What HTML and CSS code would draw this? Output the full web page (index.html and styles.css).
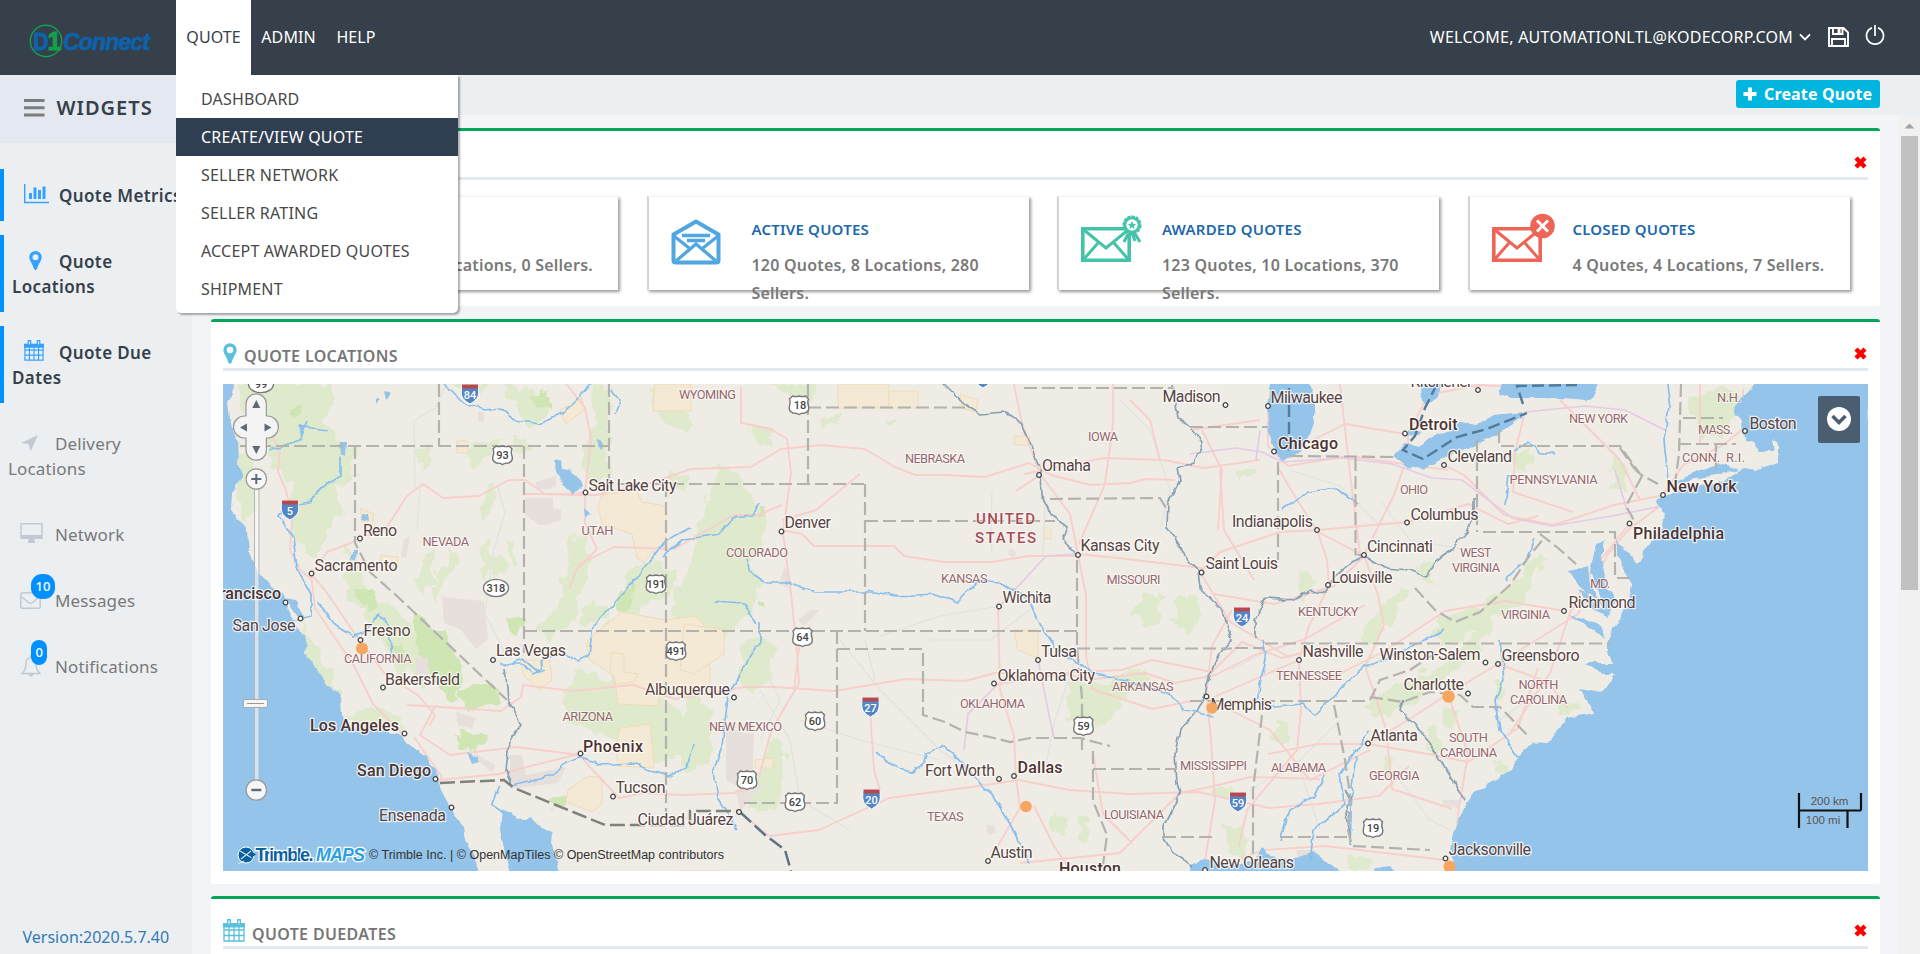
FILE: index.html
```html
<!DOCTYPE html>
<html lang="en">
<head>
<meta charset="utf-8">
<title>D1Connect</title>
<link rel="stylesheet" href="styles.css">
</head>
<body>
<header class="topbar">
  <div class="logo">
    <svg width="124" height="36" viewBox="0 0 124 36">
      <circle cx="17" cy="18" r="15.700" fill="none" stroke="#12a04f" stroke-width="1.400"/>
      <text x="4.500" y="26.500" class="logo-d" textLength="15" lengthAdjust="spacingAndGlyphs">D</text>
      <text x="18.500" y="27" class="logo-one">1</text>
      <text x="34" y="26.500" class="logo-word" textLength="87">Connect</text>
    </svg>
  </div>
  <nav class="menu">
    <div class="menu-item open">QUOTE
      <ul class="dropdown">
        <li>DASHBOARD</li>
        <li class="current">CREATE/VIEW QUOTE</li>
        <li>SELLER NETWORK</li>
        <li>SELLER RATING</li>
        <li>ACCEPT AWARDED QUOTES</li>
        <li>SHIPMENT</li>
      </ul>
    </div>
    <div class="menu-item">ADMIN</div>
    <div class="menu-item">HELP</div>
  </nav>
  <div class="user">
    <span>WELCOME, AUTOMATIONLTL@KODECORP.COM</span>
    <svg class="chev" width="12" height="8" viewBox="0 0 12 8"><path d="M1 1.300 6 6.300 11 1.300" fill="none" stroke="#fff" stroke-width="1.900"/></svg>
    <svg class="save" width="21" height="20" viewBox="0 0 21 20"><path d="M1 1h14.500l4.500 4.500V19H1zM5 1v6h9.500V1M4 19v-7h13v7" fill="none" stroke="#fff" stroke-width="1.900"/><path d="M9.500 2h3v4h-3z" fill="#fff"/></svg>
    <svg class="power" width="20" height="22" viewBox="0 0 20 22"><path d="M7 3.700a8.500 8.500 0 1 0 6 0M10 1v11" fill="none" stroke="#fff" stroke-width="1.700"/></svg>
  </div>
</header>

<div class="shell">
  <aside class="sidebar">
    <div class="widgets"><svg width="21" height="18" viewBox="0 0 21 18"><path d="M0 1.500h20.500M0 8.700h20.500M0 16h20.500" stroke="#7d7d7d" stroke-width="3"/></svg><span>WIDGETS</span></div>
    <ul class="side-list">
      <li class="active nowrap"><i class="ico"><svg width="25" height="20" viewBox="0 0 25 20"><path d="M.700 0v18.500H25" fill="none" stroke="#36a2ff" stroke-width="1.400"/><path d="M5 9h3v6H5zM9.500 3.500h3V15h-3zM14 6h3v9h-3zM18.500 2.500h3V15h-3z" fill="#36a2ff"/></svg></i>Quote Metrics</li>
      <li class="active"><i class="ico pin"><svg width="13" height="19" viewBox="0 0 13 19"><path fill-rule="evenodd" d="M6.500 0A6.200 6.200 0 0 0 .3 6.300C.3 9.500 3.500 12.500 5 18q1.500 2 3 0c1.500-5.500 4.700-8.500 4.700-11.700A6.200 6.200 0 0 0 6.500 0Zm0 3.300a3 3 0 1 1 0 6 3 3 0 0 1 0-6Z" fill="#36a2ff"/></svg></i>Quote Locations</li>
      <li class="active"><i class="ico"><svg width="20" height="21" viewBox="0 0 22 23"><use href="#cal" fill="#36a2ff" stroke="#36a2ff"/></svg></i>Quote Due Dates</li>
      <li><i class="ico plane"><svg width="17" height="17" viewBox="0 0 17 17"><path d="M17 0 9.500 16.500 8 9 0 8Z" fill="#c3c9d3"/></svg></i>Delivery Locations</li>
      <li><i class="ico"><svg width="23" height="20" viewBox="0 0 23 20"><path d="M1 .700h21v14.500H1z" fill="none" stroke="#c3c9d3" stroke-width="1.400"/><path d="M1 12h21v4H1zM9 16h5l1 3v1H8v-1z" fill="#c3c9d3"/></svg></i>Network</li>
      <li><i class="ico"><svg width="21" height="17" viewBox="0 0 21 17"><rect x=".8" y=".8" width="19.400" height="15.400" rx="1.500" fill="none" stroke="#c3c9d3" stroke-width="1.500"/><path d="m1 4.500 7.500 6q2 1.300 4 0l7.500-6" fill="none" stroke="#c3c9d3" stroke-width="1.500"/></svg><b class="badge">10</b></i>Messages</li>
      <li><i class="ico bell"><svg width="20" height="22" viewBox="0 0 20 22"><path d="M1 18.500c3-2.500 4-6 4-10 0-8 10-8 10 0 0 4 1 7.500 4 10z" fill="none" stroke="#c3c9d3" stroke-width="1.500"/><path d="M7.500 19h5a2.500 2.500 0 0 1-5 0zM9 0h2v3H9z" fill="#c3c9d3"/></svg><b class="badge">0</b></i>Notifications</li>
    </ul>
    <div class="version">Version:2020.5.7.40</div>
  </aside>

  <main class="content">
    <div class="actions"><a class="create"><svg width="14" height="14" viewBox="0 0 14 14"><path d="M7 .500v13M.500 7h13" stroke="#fff" stroke-width="4"/></svg>Create Quote</a></div>
    <div class="scroller">
      <div class="panels">
        <section class="panel metrics">
          <div class="head"><span></span><svg class="x" width="13" height="13" viewBox="0 0 13 13"><use href="#cross"/></svg></div>
          <div class="cards">
            <div class="card"><div class="art"></div><div class="info"><h4>&nbsp;</h4><p>0 Quotes, 0 Locations, 0 Sellers.</p></div></div>
            <div class="card"><div class="art"><svg width="50" height="46" viewBox="0 0 50 46"><g fill="none" stroke="#4fa6e0" stroke-width="4" stroke-linejoin="round"><path d="M2.500 15.500v26q0 2 2 2h41q2 0 2-2v-26L25 2.500Z"/><path d="m3 17 15 12M47 17 32 29M5 42l20-17 20 17M11 16.500h28M16 21.500h18" stroke-width="3.300"/></g></svg></div><div class="info"><h4>ACTIVE QUOTES</h4><p>120 Quotes, 8 Locations, 280 Sellers.</p></div></div>
            <div class="card"><div class="art"><svg width="64" height="50" viewBox="0 0 64 50"><g fill="none" stroke="#45c3a8"><path d="M1.800 15.800h46.400v31.400H1.800z" stroke-width="3.600"/><path d="m3 17 22 18 22-18M3 46l14-16M47 46 33 30" stroke-width="3"/><circle cx="51" cy="12" r="8" fill="#fff" stroke-width="3.200" stroke-dasharray="3.300 .800"/><circle cx="51" cy="12" r="7" stroke-width="2.500"/><path d="m53 19 6 10M47 21l-4 8M51 20l3 8" stroke-width="3"/></g><path d="m51 8 1.200 2.800 3 .200-2.300 1.900.800 3-2.700-1.600-2.700 1.600.8-3L46.800 11l3-.200z" fill="#45c3a8"/></svg></div><div class="info"><h4>AWARDED QUOTES</h4><p>123 Quotes, 10 Locations, 370 Sellers.</p></div></div>
            <div class="card"><div class="art"><svg width="64" height="50" viewBox="0 0 64 50"><g fill="none" stroke="#ec6557"><path d="M1.800 15.800h46.400v31.400H1.800z" stroke-width="3.600"/><path d="m3 17 22 18 22-18M3 46l14-16M47 46 33 30" stroke-width="3"/></g><circle cx="50.500" cy="13" r="12.300" fill="#ec6557"/><path d="m45 7.500 11 11m0-11-11 11" stroke="#fff" stroke-width="3"/></svg></div><div class="info"><h4>CLOSED QUOTES</h4><p>4 Quotes, 4 Locations, 7 Sellers.</p></div></div>
          </div>
        </section>

        <section class="panel locations">
          <div class="head"><span><svg width="14" height="21" viewBox="0 0 13 19"><path fill-rule="evenodd" d="M6.500 0A6.200 6.200 0 0 0 .3 6.300C.3 9.500 3.500 12.500 5 18q1.500 2 3 0c1.500-5.500 4.700-8.500 4.700-11.700A6.200 6.200 0 0 0 6.500 0Zm0 3.300a3 3 0 1 1 0 6 3 3 0 0 1 0-6Z" fill="#5bc0de"/></svg>QUOTE LOCATIONS</span><svg class="x" width="13" height="13" viewBox="0 0 13 13"><use href="#cross"/></svg></div>
          <svg class="map" width="1645" height="487" viewBox="223 384 1645 487">
            <defs>
              <path id="cross" d="M2 2 11 11M11 2 2 11" stroke="#f00" stroke-width="4.500"/>
              <g id="cal"><path d="M1 6h20v16H1zM1 11h20M1 16.500h20M6 8v14M11 8v14M16 8v14" fill="none" stroke-width="1.300"/><path d="M0 4h22v4.500H0z" stroke="none"/><path d="M6 1v4M16 1v4" stroke-width="4" stroke-linecap="round"/><path d="M6 1.500v3M16 1.500v3" stroke="#fff" stroke-width="1.300"/></g>
              <g id="inter"><path d="M-8-9H8q2 9-1 13.500Q4 8 0 10-4 8-7 4.500-10 0-8-9Z" fill="#5486c6" stroke="#fff" stroke-width="1"/><path d="M-8-9.500H8v4H-8Z" fill="#b8474f"/></g>
              <path id="us" d="M-6.500-9q3 1.300 6.500 0 3.500 1.300 6.500 0L9.500-6Q8-3 9.500 1 11 6 6 8 2 8 0 9.500-2 8-6 8q-5-2-3.500-7 1.500-4 0-7Z" fill="#fff" stroke="#777" stroke-width="1.400"/>
              <ellipse id="st" rx="12.500" ry="8.700" fill="#fff" stroke="#777" stroke-width="1.300"/>
              <circle id="c" r="2.300" fill="#fff" stroke="#444" stroke-width="1.300"/>
              <filter id="rough" x="-5%" y="-5%" width="110%" height="110%"><feTurbulence type="fractalNoise" baseFrequency=".07" numOctaves="3" seed="4"/><feDisplacementMap in="SourceGraphic" scale="18" xChannelSelector="R" yChannelSelector="G"/></filter>
              <filter id="shore" x="-5%" y="-5%" width="110%" height="110%"><feTurbulence type="fractalNoise" baseFrequency=".09" numOctaves="2" seed="9"/><feDisplacementMap in="SourceGraphic" scale="6" xChannelSelector="R" yChannelSelector="G"/></filter>
            </defs>
            <rect x="223" y="384" width="1645" height="487" fill="#efece5"/>

            <!-- forests and parks -->
            <g fill="#dfe9cc" filter="url(#rough)">
              <path d="M236 384h98l4 20-14 14 20 30 12 30-22 10 10 24-18 20-8 30-16-10-14-36 4-30-20-20-8-36-20-16z"/>
              <path d="M332 446h24l-2 34-12 8zM345 540l20 40 26 40 20 50-10 8-22-40-30-40-4-40zM372 590l24 20 16 30-14 6-20-24z"/>
              <path d="M236 446l16 10 6 40-10 30-10-20zM346 715l30-8 30 16-10 10-40-4zM300 620l20 34 22 40-8 2-26-34z"/>
              <path d="M418 450l14-8-4 22-8 6zM464 446l36-6-6 14-12 4-2 14-8-2zM490 480l8 2-10 40-10 2zM480 545l10-4 2 26-10 12zM450 550l10 4-16 30-8 16-6-10zM425 555l10-6-2 30-10 16-6-14zM508 540l6 2 2 22-6 2z"/>
              <path d="M500 384l40 4 6 30-16 12-14-24zM512 434h14l2 16-14-2zM594 384l14 2 2 90-18 12-12-30 10-20zM646 384l20 2 30 40-8 10-28-20zM570 540l16-6 4 30-16 50-22 26-14-10 24-30z"/>
              <path d="M628 568l30-10 20 20-10 20-24 4-12 14-16 6zM580 606l28-4 4 20-28 4zM575 670l40 10 46 20 36 26-6 30-40 4-30-22-60-20z"/>
              <path d="M720 462l18 14 12 20 14 22-4 30-14 14 16 20-12 30-30 30-20-4-30-16 6-30 20-30-2-30 12-24z"/>
              <path d="M748 422l24 8 2 20-16-6zM768 384h50l-6 14-20-2zM670 470l20 10-6 14-14-8zM744 636l30 8-4 40-20 14-12-20zM690 690l24 20-6 50-22 14-10-20zM770 740l16 6-8 60-30 4 14-40z"/>
              <path d="M1068 680l40 4 26-18 16 10-30 24-10 20-36 6-8-24zM1075 705l40 8-12 14-36-4zM1056 814l14 6-4 14-14-6zM1080 818l10 2-4 24-8-6zM1150 590l10 6 2 24-16 8-14-14zM1178 596l18 2 6 20-14 14-14-10zM820 418l24-4-6 10-16 2zM886 418l14 2-8 6z"/>
              <path d="M1235 846l10-10 4 20-10 8zM1275 720l16 4-2 20-14-4zM1215 785l20 4-8 12-12-6zM1225 828l20-8-4 34-12-4zM1350 856l24 4-12 12-14-4zM1384 756l14 4-8 18-8-6z"/>
              <path d="M1370 704l28-20 34-14 30-24 20-6-10 20-30 20-30 24-34 14-14-8zM1440 620l36-14 34-20 28-34 10 6-20 34-40 34-44 22-10-14zM1450 660l30-30 10-10 4 10-30 34zM1360 636l14-20 26-30 10 4-22 34-18 24z"/>
              <path d="M1510 450l20-4 2 18-14 8zM1416 564l14 2 2 16-12-2zM1300 570l14 14-10 20-8-10zM1232 470h22l4 6-24 2zM1444 706l14 6-2 14-14-6zM1426 730l10-4 6 20-10 10zM1495 760l12 4 6 12-16-2zM1555 700l20 2 10 8-26 4zM1495 680l8 2-2 20-8-4zM1690 400l30-14 20 10-10 30-30 14zM1615 450l14 16-6 30-10-6z"/>
              <path d="M450 384l40 0-6 10-20 0zM490 560l10-6 4 16-8 10zM398 610l10 10 20 50-8 16-26-40z"/>
            </g>
            <g fill="#cfe6b4" filter="url(#rough)">
              <path d="M412 615l30 18 20 34-4 34-14-4-26-44zM356 594l20-6 4 18-16 8zM386 640l16 4 4 16-12-2zM460 690l34-10 6 20-22 10-16-8zM456 735l28-4 2 14-24 2zM290 406h10v10h-10zM532 396l14-6 2 20-10 2zM506 620l14-6 0 14-8 8zM620 590l18-4-8 20-12 4zM758 505l8 0 0 14-8-2zM550 798l12-2v10h-10zM760 602l6 0 0 8-6-2z"/>
            </g>
            <!-- deserts, monuments and reserves -->
            <g fill="#f4e9d5" stroke="#efdcb8" stroke-width="1">
              <path d="M655 384h36v27h-38zM838 384h51v24h-51zM889 391h29v17h-29zM602 495l34-5 6 12 24 4v42l-14 4-8 10-7-4-5-24-30-10-4-18zM592 636l30-24 44 8 30-4 14 16v54l-20 10-30-6-2 16-40-2-4-28-24-16-4-16zM620 728l30-4 4 44-36-2-2-20zM568 790l20-14 14 2v26l-10 8-26-10z"/>
              <path d="M457 441h11v12h-11zM560 410l22-12 2 12-18 14zM1014 630l24 0v28l-20-8zM1014 436h16v9h-16zM1044 528h7v11h-7zM960 394l18 6-2 12-14-4zM360 508l14 6-2 14-10-6zM380 555l18 2 0 10-16-3zM755 760l18-2v10h-18zM684 624l40 6v24l-30 20-14-4zM680 874h44v-3h-44zM520 660l30 0 2 20-12 10-16-14z"/>
              <path d="M612 652l12 2 0 18 14 2-4 8-18 2-6-12z" fill="none"/>
            </g>
            <g fill="#e7dfdc">
              <path d="M536 482l20-6v10l-6 3h-14zM525 498h28v10l8 2v10l-14 5h-8l-14-10zM442 597l42 4 4 38-12 10-16-20-16-6zM416 658l12 0v22l-12-4zM456 712l20 6-4 10-14-2zM726 730l28 4-2 60-26-14zM736 790l28-8-24 30zM510 755l12 0 4 20 40-8-8 16-48 6zM478 412h6v9h-6zM785 566l4 8-2 14-8-4zM810 610l10 0-16 16-6-6zM986 825l8 0 2 8-8 2zM404 806l16 0-8 4zM475 753l20 12-2 8-20-16zM1442 800l20 0-4 8-14-2z"/>
              <path d="M1296 850l18 0 6 4-22 6zM404 540l6-4-4 22-5-2zM1010 548l6 4-2 6-6-4z"/>
            </g>

            <!-- minor roads -->
            <g fill="none" stroke="#e1e2e1" stroke-width="1.200">
              <path d="M415 490l-1-70 22-12 10-24M420 490l-3 40M497 483l8 30-12 40-8 60 20 40M840 640l40 50 60 60 40 30M760 690l30 50 10 60 50 30M800 720l60 20 80 20M865 640l10 40M1000 606l-60 10-60 20M1045 505l-2 50M992 492l-1 40 1 20M750 640l30 60-20 40M1075 660l-20 60-10 50M930 640l60 0 40-30M1120 400l30 30 20 60-10 40M1290 470l50 16 40 40M1380 500l30 40 60 10M1230 670l40-20M1340 720l-40 40-50 30M1400 780l30 40 20 10M1540 690l-40 30M1300 770l20 60M640 560l50 40"/>
            </g>
            <!-- highways -->
            <g fill="none" stroke="#f7cfcb" stroke-width="1.900" stroke-linejoin="round">
              <path d="M268 430l12 20-2 22 8 18 6 30-2 30 10 20 10 8M311 574l16-22 22-8 10-6 26-8 22-34 16-12 20 14 36-2 30-16h16l20 14 26 1 26 0 14-4 40-8 40-14 60-2 30-18 40-4 44 4 30 18 20 8h30l40 2 44-14 22 12 40 10 40-2 14-4 30 1M1040 475l-24 16M311 574l14 16 30 44 30 40 34 22 16 20-6 10M400 735l8 20 24 14 6 14 4-6-14-20-14-20M311 574l4 34 20 30 18 26 20 40 30 30M436 705l-16 30 30 20 66-8 64 8M407 705l34 2 60 4 20-14 2-12 50 6 60-6 42 14 70-12 30 0 60 4 70-12 60 2 30-8 60 0 40 6 50-6 30 10 40-8 40-20 50-16 60-34"/>
              <path d="M439 780l60-6 80-20 10 12 30 32 24-5 40 2 50-2 20-6M524 494h50l11-2 6-54-6-30-20-26M585 493l0 30 12 26-20 20-8 20M578 565l36-18 60 2 60-34 24 0 24-10M741 387v36l30 6 16 10 4 34-8 60 8 60 6 60 2 30-28 48-12 46M782 530l20 4 12 12h80l10 10 40 6h48l36-6 50 0M782 520l34-10 44-36M739 812l30 24 50-6 70-32 90-12 40-6 50 10 60 4 70-2 70 16 50-4 60-8 30-30M800 640l-6 50M1034 806l20 40 16 24M1016 778l4 30-20 34-12 20M870 710l4 60 6 20M1016 776l-2-40-14-46-2-84M998 684l40-6 34-6 50-2 30-10 60 12 30-30 40 16 40-10 36 4M1078 555l8 40 0 60 6 34 60 20 40-8"/>
              <path d="M1014 384l8 40 18 50 30 40 8 40 40 4 50 6 34 4M1024 474l80-16 60 2 40 8 56-8M1113 384v40l-8 60-26 60M1160 460l-10-40-20-20M1200 572l20-20 60-20 38-2 44-4 46-4 60-18 40 20 30-8M1317 530l-20-30-20-34M1317 530l10 30 2 26-20 40-10 34 2 50-4 40-50 60-8 36M1318 532l46 24-30 30-60 18-60-10M1364 555l14 40 6 30-18 40 0 4 20 60 6 60 60 20M1299 660l-46 20-46 20 4 40 4 60-10 60M1210 700l60 30 40 50 60-30M1368 744l40-24 40-26 50-30 80-50 30-60 20-24 40-30M1368 744l-50 0-50 10M1368 744l60 10 40 8 50-34 20-60M1448 694l20 60-10 60-4 50M1498 664l50 18 20 26"/>
              <path d="M1364 555l30-60 14-40 0-20 20-40 50-10 40 2 20 6M1444 465l20 10 40 40 50 10 60-20 50-10M1268 406l0 40 20 20 60-10 70 10 30 4M1405 434l-60-10-60 30M1340 384l10 90 10 80M1525 412l-10 40-2 40 60 20M1560 400l60 60 20 40M1630 523l-40 50-20 40-20 60-40 60M1565 611l-60-10-60 10-60 40-60 30M1663 495l20-30 40-20 20-16 0-40M1700 384l0 60M1205 870l60-20 60-4 120 14M1200 572l30 50 60 36M1206 696l6-50 20-36M1190 430l70-10M1218 530l4-60-20-40M1220 470l4 60 30 50M1180 793l30-6 40-10 70 2M1180 793l-20 20-40 40-100 10M1093 754l10 60 30 30"/>
            </g>
            <g fill="none" stroke="#e5cbe3" stroke-width="1.700"><path d="M1190 454l46-6 26 4 20 10 60-4 50 6 40 14 30 2 50 38 40 8 60-10 50-10M1525 412l60-6 40 4 40 20M1260 430l-4 30M1000 606l46-50 30-2M998 684l-30 30-4 36M1038 660l12 60 4 18M1615 470l12 40"/></g>

            <!-- lakes and sea -->
            <g fill="#94c4ea" filter="url(#shore)">
              <path d="M215 376h23l-10 27 2 17 7 23 1 17 5 17-11 15-1 18 7 8 9 12 2 20 6 15 8 12 9 10 12 6 3 10 3 12 16 25-1 13 16 22 12 15 7 7 1 18 10 12 29 3 20 5 6 8 20 14 10 15 5 18 9 17 13 20 2 13 11 17 2 24H215z"/>
              <path d="M502 808l21 12 7-3 8 8 15 7-1 13 10 34h-51l-11-49z"/>
              <path d="M553 460l9-1 1 9 9 2 11 15-10 10-8-8-7-14zM467 752l11 5 2 6-7 2zM340 442l6 0-1 14-4-2zM362 514l6 0 1 8-6-2zM352 550l5 0-1 10-4-2zM585 508l5 6-4 4zM384 390l8 4-6 6zM376 396l4 4-4 3zM598 440l5 2-2 8-4-4zM298 424l8 4-4 12zM285 598l12 2 6 20-8-6z"/>
              <path d="M1271 376h37l7 24v20l-8 23-14 15-10 2-8-8-6-19-2-26zM1420 376h24l-6 21-13 10-3-7zM1403 442l17 5 10-9 23-8 7-8 17 3 16-10 30-3v5l-23 16-23 12-24 8-30 16-16-2-13-10zM1503 376h99l-12 24-30-2-50 0-11-3zM1408 429l14 2-4 5-10-1z"/>
              <path d="M1868 376H1773l-18 8-16 16-6 14 8 8 1 10 4 8 8 2 6 10 14 0-2-12 6 4 0 18-22 8-12-2-18 12-40 8-24 8-6 5 8 12-2 14-12 16-12 20-16-16-5-8 0 12 6 18 9 14-2 13-10 24-9 13-3 10 0 10 5 10-6 0-22 0 18 12 12 0-13 18-22-4 10 16 3 8-26 5-19 24-15 1-15 14-6 13-22 13-17 12-11 17-9 20-3 20 5 28h420z"/>
              <path d="M1605 540l-9 5-6 26 8 20 10 24 8-14-10-16-4-28zM1588 566l-18 6 14 20 20 18-14-26zM1578 590l26 12 4 14-18-8zM1570 615l30 10 6 14-16-10zM1740 470l-50 10-20 6 20-12 30-10z"/>
              <path d="M1190 864l14-4 20 4 30-2 9-14 7 9 20 3 23-8 14 11 10 5 14 10h-160zM1374 868l16-2 6 8h-24z"/>
            </g>
            <!-- rivers -->
            <g fill="none" stroke="#86bfed" stroke-width="1.700" stroke-linejoin="round" filter="url(#shore)">
              <path d="M444 384l20 20 20 6 16-2 14 12 26 4 24-12 22-22 16-20M612 390l8 10-6 14M298 426l30 4M270 450l30-10 8-18M341 456v20l-20 12-12 14-24 4-6 10 14 22 4 30 14 26v22l-26 6M318 602l18 24 16 10 14-6 12-16 10 10 4 30M505 665l18-6 14 12 10-14 20-2 12 6 10-6 4-30 20-20 10-12 20-24 24-30 24-10M500 664l24 0 8 10 12-4M512 785l40-10 14-14 14-4 20 8 30-2 40 14 16-8 8-24M500 785l-8 20 12 8M663 556l20-16 36-6 14-16 20-2 6-14M747 558l6 16 12 8 20 0 30 10 60 0 20 4 40-2 22 8 22-22 20 2 30 18 10 24 16 24 40 26 44 10 30 10 16 16 28 6M760 622v20l-20 30-12 24-6 50-8 24 4 30 20 30M876 752l16 14 18 6 14-8 2-12 18-6 16 14 16 20 16 14 18 30 20 40M714 602l30 2 12 20"/>
              <path d="M1283 510l24-18 30-4 20 16M1310 860l4-30 30-26-4-30 20-30 10-14M1280 840l10-30 24-14 10-20M1350 846l2-60 4-30M1262 640l4 20-10 40 18 6 30-2 10 12 20-20 30-30 20-6 60-30M1500 640l4 40-8 20 4 30 20 30M1515 450l14-8 12 12 14 0M1505 505l4-30M1505 580l20-20 10-20M1668 480l-4-40 6-40-2-16"/>
            </g>
            <g fill="none" stroke="#7596ad" stroke-width="1.700" stroke-linejoin="round" filter="url(#shore)" opacity=".85">
              <path d="M943 384l22 21 15 9 25-2 17 12 8 19 10 27 1 25 11 20 16 12-5 13 13 15M1173 384l5 34 12 9 13 15-10 21-15 5 2 12-12 23-1 24 10 16 13 19 8 8 2 18 22 22 6 18 4 12-12 13-13 30-2 14-13 20-12 13-5 23 2 30 3 10-17 34v10l10 16 20 13M1355 555h8l22 13 25 2 17 7 10-17 13-10 17-17 8-23v-12M1363 555l-18 13-8 7-12 17-15-2-15 10-30-2-10 22 0 18M505 668l3 32 12 25-10 15-3 30 5 15M1403 700l-3 10 20 20 17 25 13 20 15 25M1345 790l6 8-5 8 4 30"/>
            </g>
            <!-- borders -->
            <g fill="none" stroke="#b4b2ad" stroke-width="2.200" stroke-dasharray="13 5">
              <path d="M240 446h369M355 446v97l15 29 28 25 109 103M439 384v62M609 384v100h256M666 484v331M524 446v207M524 631h553M837 631v172h-97M837 649h86v66l22 7 20 10 25 5 20 5 20-4 50 0 30 8M865 484v147M865 521h190M808 384v100M808 407.500h157M1077 560v88l5 50v52M1077 648.500h155M1235 648h28M1265 643.500h345M1050 499l110-1 6 10M1024 388h149M1093 751v50l14 34-4 30M1093 769h84M1190 427h78M1278 462v98M1355.500 458v97M1290 456l104 1M1477 440v92M1499 430v16h121l20 28 18 10M1483 532h132v46h18M1190 701h180M1262 715l-9 75v65M1334 705l11 55 5 35-2 35 4 16 78 4M1280 837h70M1163 837h50M1370 697l33 5 27-10 30 3 13 12h27l30 31M1370 700l10-20 30-10 30-20M1415 588l20 22 20 12 25-10 30-27 20-30 15-18M1681 384l-2 70-4 30M1683 418h40M1678 444h58M1716 444v26M1540 534l18 14 18 16M1620 448l14 20 8 8-16 30 10 18"/>
            </g>
            <g fill="none" stroke="#80807c" stroke-width="2.500" stroke-dasharray="15 5"><path d="M440 783l64-3 10 8 91 37h85v-14h49"/><path d="M740 812l25 23 20 15 6 21" stroke="#5c7585"/></g>
            <g fill="none" stroke="#547b98" stroke-width="2.400" stroke-dasharray="12 5"><path d="M1289 388v68M1437 384l-12 24-10 28-12 14 20 9 34-22 30-8 40-16M1523 404l-6-18 60-1" /></g>

            <!-- road shields -->
            <g class="shield">
              <use href="#st" x="261" y="384"/><text x="261" y="388">99</text>
              <use href="#st" x="496" y="588"/><text x="496" y="592">318</text>
              <use href="#us" x="502.500" y="455"/><text x="502.500" y="459">93</text>
              <use href="#us" x="656" y="584"/><text x="656" y="588">191</text>
              <use href="#us" x="676" y="651"/><text x="676" y="655">491</text>
              <use href="#us" x="799" y="405"/><text x="800" y="409">18</text>
              <use href="#us" x="802.500" y="637"/><text x="802.500" y="641">64</text>
              <use href="#us" x="815" y="721"/><text x="815" y="725">60</text>
              <use href="#us" x="747" y="780"/><text x="747" y="784">70</text>
              <use href="#us" x="795" y="802"/><text x="795" y="806">62</text>
              <use href="#us" x="1083.500" y="726"/><text x="1083.500" y="730">59</text>
              <use href="#us" x="1373" y="828"/><text x="1373" y="832">19</text>
            </g>
            <g class="shield interstate">
              <use href="#inter" x="470" y="394"/><text x="470" y="399">84</text>
              <use href="#inter" x="290" y="510"/><text x="290" y="515">5</text>
              <use href="#inter" x="870.500" y="707"/><text x="870.500" y="712">27</text>
              <use href="#inter" x="871.500" y="799"/><text x="871.500" y="804">20</text>
              <use href="#inter" x="1242" y="617"/><text x="1242" y="622">24</text>
              <use href="#inter" x="1238" y="802"/><text x="1238" y="807">59</text>
              <use href="#inter" x="983" y="378"/>
            </g>

            <!-- zoom slider track -->
            <rect x="254.500" y="489" width="4.500" height="292" fill="#fff" fill-opacity=".55" stroke="#b5b5b5"/>

            <!-- state names -->
            <g class="state">
              <text x="422.500" y="546" textLength="46.500">NEVADA</text><text x="581.500" y="535" textLength="32">UTAH</text>
              <text x="344" y="663" textLength="67.500">CALIFORNIA</text><text x="562.500" y="721" textLength="50.500">ARIZONA</text>
              <text x="679" y="399" textLength="57">WYOMING</text><text x="905" y="463" textLength="60">NEBRASKA</text>
              <text x="1088" y="441" textLength="30">IOWA</text><text x="726" y="557" textLength="62">COLORADO</text>
              <text x="941" y="583" textLength="46.500">KANSAS</text><text x="1106.500" y="584" textLength="54">MISSOURI</text>
              <text x="1112" y="691" textLength="61.500">ARKANSAS</text><text x="960" y="708" textLength="65">OKLAHOMA</text>
              <text x="709" y="731" textLength="73">NEW MEXICO</text><text x="927" y="821" textLength="36.500">TEXAS</text>
              <text x="1104" y="819" textLength="60">LOUISIANA</text><text x="1180" y="770" textLength="67">MISSISSIPPI</text>
              <text x="1569" y="423" textLength="59">NEW YORK</text><text x="1509.500" y="484" textLength="88">PENNSYLVANIA</text>
              <text x="1400" y="494" textLength="28">OHIO</text><text x="1460" y="557" textLength="31.500">WEST</text>
              <text x="1452" y="572" textLength="48">VIRGINIA</text><text x="1590" y="588" textLength="20">MD.</text>
              <text x="1298" y="616" textLength="60.500">KENTUCKY</text><text x="1501" y="619" textLength="49">VIRGINIA</text>
              <text x="1276" y="680" textLength="66">TENNESSEE</text><text x="1518.500" y="689" textLength="40">NORTH</text>
              <text x="1510" y="704" textLength="57">CAROLINA</text><text x="1449" y="742" textLength="39">SOUTH</text>
              <text x="1440" y="757" textLength="57">CAROLINA</text><text x="1271" y="772" textLength="55">ALABAMA</text>
              <text x="1369" y="780" textLength="50.500">GEORGIA</text><text x="1717" y="402" textLength="24">N.H.</text>
              <text x="1698" y="434" textLength="35">MASS.</text><text x="1682" y="462" textLength="38">CONN.</text><text x="1726" y="462" textLength="19">R.I.</text>
            </g>
            <g class="country"><text x="976" y="524" textLength="59">UNITED</text><text x="975" y="543" textLength="61">STATES</text></g>

            <!-- city names -->
            <g class="city" transform="translate(-.5 -.5)">
              <text x="589" y="491" textLength="88">Salt Lake City</text><text x="363.500" y="536" textLength="34">Reno</text>
              <text x="315" y="571" textLength="83">Sacramento</text><text x="233" y="631" textLength="63">San Jose</text>
              <text x="364" y="636.500" textLength="47">Fresno</text><text x="385.500" y="685" textLength="75">Bakersfield</text>
              <text x="496.500" y="656.500" textLength="70">Las Vegas</text><text x="379.500" y="821" textLength="67">Ensenada</text>
              <text x="616" y="793" textLength="50">Tucson</text><text x="638" y="825" textLength="96">Ciudad Juárez</text>
              <text x="645.500" y="695" textLength="85">Albuquerque</text><text x="1042.500" y="471.500" textLength="49">Omaha</text>
              <text x="785" y="528" textLength="46.500">Denver</text><text x="1081" y="551" textLength="79">Kansas City</text>
              <text x="1003" y="603" textLength="49">Wichita</text><text x="1041.500" y="657.500" textLength="36">Tulsa</text>
              <text x="998" y="681" textLength="97.500">Oklahoma City</text><text x="925.500" y="776" textLength="70">Fort Worth</text>
              <text x="991" y="858" textLength="42">Austin</text><text x="1163" y="402" textLength="58">Madison</text>
              <text x="1271" y="403" textLength="72">Milwaukee</text><text x="1411" y="387" textLength="62">Kitchener</text>
              <text x="1448" y="462" textLength="64.500">Cleveland</text><text x="1411" y="520" textLength="68">Columbus</text>
              <text x="1232.500" y="527.500" textLength="81">Indianapolis</text><text x="1367.500" y="552" textLength="66">Cincinnati</text>
              <text x="1206" y="569" textLength="72.500">Saint Louis</text><text x="1332" y="583" textLength="61">Louisville</text>
              <text x="1569" y="608" textLength="67">Richmond</text><text x="1303" y="657.500" textLength="61">Nashville</text>
              <text x="1380" y="660" textLength="101">Winston-Salem</text><text x="1502" y="661" textLength="78">Greensboro</text>
              <text x="1404" y="690" textLength="60.500">Charlotte</text><text x="1211" y="710" textLength="61.500">Memphis</text>
              <text x="1371" y="741" textLength="47.500">Atlanta</text><text x="1449" y="855.500" textLength="82.500">Jacksonville</text>
              <text x="1210" y="868" textLength="84.500">New Orleans</text><text x="1750" y="429" textLength="47">Boston</text>
            </g>
            <g class="city major" transform="translate(-.5 -.5)">
              <text x="281.500" y="599" text-anchor="end">San Francisco</text><text x="310.500" y="731" textLength="89">Los Angeles</text>
              <text x="357.500" y="776" textLength="74">San Diego</text><text x="583.500" y="752" textLength="60">Phoenix</text>
              <text x="1018" y="773" textLength="45">Dallas</text><text x="1059.500" y="874.500" textLength="62">Houston</text>
              <text x="1278.500" y="449" textLength="60">Chicago</text><text x="1409.500" y="430" textLength="48.500">Detroit</text>
              <text x="1667" y="492" textLength="70">New York</text><text x="1633.500" y="539" textLength="91">Philadelphia</text>
            </g>
            <g>
              <use href="#c" x="585.500" y="492.500"/><use href="#c" x="360" y="538.500"/><use href="#c" x="311.500" y="573.500"/><use href="#c" x="285.500" y="602.500"/><use href="#c" x="300.500" y="618.500"/><use href="#c" x="360.500" y="640"/><use href="#c" x="383" y="687.500"/><use href="#c" x="493" y="660"/><use href="#c" x="404.500" y="733.500"/><use href="#c" x="435.500" y="779"/><use href="#c" x="451.500" y="807.500"/><use href="#c" x="580.500" y="753.500"/><use href="#c" x="613" y="796.500"/><use href="#c" x="739" y="812"/><use href="#c" x="734" y="697.500"/><use href="#c" x="1039" y="475"/><use href="#c" x="781.500" y="531.500"/><use href="#c" x="1078" y="555"/><use href="#c" x="999" y="606.500"/><use href="#c" x="1038" y="660"/><use href="#c" x="994" y="683.500"/><use href="#c" x="999" y="779"/><use href="#c" x="1014" y="776"/><use href="#c" x="988" y="861"/><use href="#c" x="1225.500" y="405"/><use href="#c" x="1268" y="406"/><use href="#c" x="1274" y="451.500"/><use href="#c" x="1478" y="390"/><use href="#c" x="1405" y="433.500"/><use href="#c" x="1444" y="465"/><use href="#c" x="1407" y="522.500"/><use href="#c" x="1317" y="530"/><use href="#c" x="1364" y="555"/><use href="#c" x="1201.500" y="572.500"/><use href="#c" x="1328" y="585"/><use href="#c" x="1564" y="611"/><use href="#c" x="1663" y="495"/><use href="#c" x="1629.500" y="523.500"/><use href="#c" x="1299" y="660"/><use href="#c" x="1485.500" y="662.500"/><use href="#c" x="1498" y="664"/><use href="#c" x="1468" y="693.500"/><use href="#c" x="1206.500" y="696.500"/><use href="#c" x="1368" y="743.500"/><use href="#c" x="1445.500" y="858.500"/><use href="#c" x="1205" y="870"/><use href="#c" x="1745" y="431"/>
            </g>
            <!-- quote markers -->
            <g fill="#f7a55f"><circle cx="362" cy="648.500" r="6"/><circle cx="1212" cy="708" r="5.800"/><circle cx="1448.500" cy="696.500" r="6.300"/><circle cx="1026" cy="806.500" r="5.800"/><circle cx="1449.500" cy="866.500" r="6"/></g>

            <!-- pan and zoom control -->
            <path d="M246 416V404a10.200 10.200 0 0 1 20.400 0V416h1a11 11 0 0 1 0 22h-1V450a10.200 10.200 0 0 1-20.400 0V438h-1.500a11 11 0 0 1 0-22z" fill="#f4f4f4" stroke="#999" stroke-width="1.200"/>
            <path d="m256.300 400 4 8h-8zM256.300 454l4-8h-8zM240 427.500l7-4v8zM271.500 427.500l-7-4v8z" fill="#5d6b78"/>
            <circle cx="256.300" cy="479" r="10.200" fill="#f6f6f6" stroke="#999" stroke-width="1.200"/><path d="M251.300 479h10M256.300 474v10" stroke="#5d6b78" stroke-width="2"/>
            <rect x="243.500" y="699.500" width="24" height="8" rx="1.500" fill="#f6f6f6" stroke="#aaa"/><path d="M247 703.500h17" stroke="#999"/>
            <circle cx="256.300" cy="790" r="10.200" fill="#f6f6f6" stroke="#999" stroke-width="1.200"/><path d="M251.300 790h10" stroke="#5d6b78" stroke-width="2.400"/>

            <rect x="1818" y="396" width="42" height="47" rx="2" fill="#4b5d70"/><circle cx="1839" cy="419" r="12" fill="#fff"/><path d="m1832.500 416 6.500 6.500 6.500-6.500" fill="none" stroke="#4b5d70" stroke-width="3.500"/>

            <path d="M1799 793v35M1799 810.500h62M1861 793v17.500M1847.500 811v17" fill="none" stroke="#111" stroke-width="2.200"/>
            <text class="scale" x="1829.500" y="805">200 km</text><text class="scale" x="1823" y="824">100 mi</text>

            <g class="trimble"><circle cx="246" cy="855" r="8" fill="#0a5f9e" stroke="#fff"/><path d="M240 851l12 7M241 859l10-8M238 864l6-3" stroke="#cfe4f5" stroke-width="1.100"/><path d="m251 851 5 3.500-5 3.500z" fill="#0a5f9e"/>
            <text x="255.500" y="861" textLength="58" fill="#0a5f9e">Trimble.</text><text x="316" y="861" textLength="49" fill="#2f9fe0" font-style="italic">MAPS</text></g>
            <text class="credit" x="369" y="858.500" textLength="355">© Trimble Inc. | © OpenMapTiles © OpenStreetMap contributors</text>
          </svg>
        </section>

        <section class="panel duedates">
          <div class="head"><span><svg width="22" height="23" viewBox="0 0 22 23"><use href="#cal" fill="#5bc0de" stroke="#5bc0de"/></svg>QUOTE DUEDATES</span><svg class="x" width="13" height="13" viewBox="0 0 13 13"><use href="#cross"/></svg></div>
        </section>
      </div>
      <div class="scrollbar"><svg width="21" height="21" viewBox="0 0 21 21"><path d="M5.500 13.500 10.500 8.500 15.500 13.500Z" fill="#a3a3a3"/></svg><div class="thumb"></div></div>
    </div>
  </main>
</div>
</body>
</html>
```
FILE: styles.css
```css
* { box-sizing: border-box; }
body { margin: 0; height: 954px; overflow: hidden; display: flex; flex-direction: column; font: 16px "Noto Sans", sans-serif; color: #797979; background: #f2f4f8; }
ul { list-style: none; margin: 0; padding: 0; }
svg { display: block; flex: none; }

.topbar { height: 75px; flex: none; display: flex; background: #36404a; color: #fff; }
.logo { width: 176px; padding: 23px 0 0 29px; }
.logo text { font-family: "Liberation Sans", sans-serif; font-weight: bold; }
.logo-d { font-size: 23px; fill: #0d62ad; stroke: #0d62ad; }
.logo-one { font-size: 25px; fill: #12a04f; stroke: #12a04f; }
.logo-word { font-size: 23px; font-style: italic; fill: #0d62ad; stroke: #0d62ad; stroke-width: .6px; }
.menu { display: flex; line-height: 75px; letter-spacing: .1px; }
.menu-item { position: relative; padding: 0 10.300px; }
.menu-item.open { width: 75px; background: #fff; color: #36404a; }
.dropdown { position: absolute; z-index: 5; top: 75px; left: 0; width: 282px; padding: 5px 0; background: #fff; border-radius: 0 0 5px 5px; box-shadow: 2px 2px 2px rgba(0,0,0,.32); line-height: 38px; color: #484848; letter-spacing: .2px; }
.dropdown li { padding-left: 25px; }
.dropdown .current { background: #2f3e50; color: #fff; }
.user { margin-left: auto; display: flex; line-height: 75px; padding-right: 35px; letter-spacing: .26px; }
.chev { margin: 33px 0 0 6px; }
.save { margin: 27px 0 0 17px; }
.power { margin: 24px 0 0 16px; }

.shell { flex: 1; min-height: 0; display: flex; }
.sidebar { width: 192px; flex: none; background: #ebeff2; display: flex; flex-direction: column; }
.widgets { height: 68px; background: #e4e9f1; display: flex; align-items: center; padding: 0 0 3px 24px; gap: 11.500px; font-size: 20px; font-weight: 600; color: #36404a; letter-spacing: 1px; }
.side-list { padding-top: 26px; font-size: 17px; line-height: 25px; }
.side-list li { padding: 13.500px 20px 13.500px 8px; margin-bottom: 14.100px; letter-spacing: .15px; }
.side-list .active { border-left: 4px solid #0191ff; color: #36404a; font-weight: 600; letter-spacing: .38px; }
.side-list .nowrap { white-space: nowrap; }
.ico { position: relative; display: inline-block; width: 47px; padding-left: 11.500px; vertical-align: -2px; }
.ico.pin { padding-left: 17px; }
.ico.plane { padding-left: 12.500px; }
.ico.bell { padding-left: 12.500px; vertical-align: -4px; }
.badge { position: absolute; left: 23px; top: -18px; padding: 0 4.500px; font: 500 13px/25px "Noto Sans", sans-serif; letter-spacing: 0; color: #fff; background: #0191ff; border-radius: 11px; }
.bell .badge { top: -15px; }
.version { margin: auto 0 0 22.500px; height: 28px; color: #337ab7; }

.content { flex: 1; min-width: 0; display: flex; flex-direction: column; }
.actions { height: 40px; flex: none; background: #ebeff2; display: flex; justify-content: flex-end; padding: 5px 40px 0 0; }
.create { height: 28px; width: 144px; display: flex; align-items: center; gap: 7px; padding-left: 7px; font-weight: 700; letter-spacing: .15px; line-height: 28px; color: #fff; background: #00b5de; border-radius: 3px; white-space: nowrap; }
.scroller { flex: 1; min-height: 0; display: flex; }
.panels { flex: 1; padding: 13px 19px 0 19px; overflow: hidden; display: flex; flex-direction: column; }
.scrollbar { width: 21px; background: #f1f1f1; }
.thumb { width: 17px; height: 454px; margin-left: 2px; background: #c1c1c1; }

.panel { flex: none; background: #fff; border-top: 3px solid #00a65a; border-radius: 3px; padding: 0 12px; }
.metrics { height: 178px; margin-bottom: 13px; }
.locations { height: 565px; margin-bottom: 12px; }
.duedates { height: 200px; }
.head { display: flex; justify-content: space-between; height: 49px; border-bottom: 3px solid #e4e9ef; font-weight: 600; color: #777; letter-spacing: .34px; }
.head span { display: flex; align-items: flex-end; gap: 7px; line-height: 24px; }
.head span svg { margin-bottom: 4px; }
.duedates .head { height: 50px; }
.x { margin: 25px 1px 0 0; }
.cards { display: flex; gap: 28.500px; padding: 16px 0 0 13.400px; }
.card { width: 382px; height: 94px; flex: none; display: flex; border-left: 2px solid #d4d4d4; border-top: 1px solid #f3f3f3; box-shadow: 2px 2px 3px rgba(0,0,0,.4); }
.art { width: 102.500px; padding: 16px 0 0 22px; flex: none; }
.card:nth-child(2) .art { padding-top: 22px; }
.info { width: 264px; font-weight: 600; line-height: 28px; letter-spacing: .23px; }
.info h4 { margin: 18px 0 8px; font-size: 15px; font-weight: 600; color: #2068ab; letter-spacing: .22px; }
.info p { margin: 0; }

.map { margin-top: 13px; }
.map text { font-family: Roboto, sans-serif; paint-order: stroke; }
.state text { font-size: 12.800px; fill: #95676d; stroke: rgba(255,255,255,.6); stroke-width: 2px; }
.country text { font-size: 15px; font-weight: 500; fill: #a74c55; stroke: rgba(255,255,255,.6); stroke-width: 2px; }
.city text { font-size: 16px; fill: #574341; stroke: rgba(255,255,255,.75); stroke-width: 2.500px; }
.city.major text { font-weight: 500; fill: #4d3331; }
.shield text { font-size: 11px; font-weight: 500; fill: #444; text-anchor: middle; }
.shield.interstate text { fill: #fff; }
.map .scale { font: 11.500px "Liberation Sans", sans-serif; fill: #555; text-anchor: middle; }
.trimble text { font: 900 18px "Liberation Sans", sans-serif; stroke: #fff; stroke-width: 2.500px; }
.trimble text:last-child { font-style: italic; }
.map .credit { font: 12.500px "Liberation Sans", sans-serif; fill: #333; }
```
